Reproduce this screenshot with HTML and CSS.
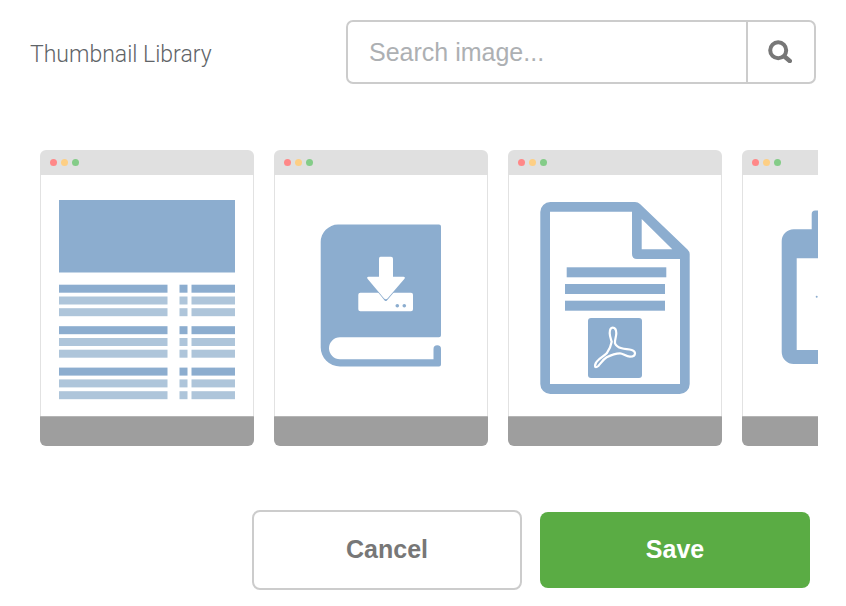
FILE: index.html
```html
<!DOCTYPE html>
<html lang="en">
<head>
  <meta charset="UTF-8">
  <meta name="viewport" content="width=device-width, initial-scale=1.0">
  <title>Thumbnail Library</title>
  <link rel="stylesheet" href="styles.css">
</head>
<body>
  <div class="library-head">
    <h2 class="library-title">Thumbnail Library</h2>
    <div class="search-box">
      <input class="search-input" type="text" placeholder="Search image...">
      <button class="search-btn" aria-label="Search">
        <svg width="24" height="24" viewBox="0 0 24 24">
          <circle cx="10.2" cy="11.3" r="8" fill="none" stroke="#777" stroke-width="4"/>
          <path d="M16.500 17.500 L21.800 22" stroke="#777" stroke-width="4.400" stroke-linecap="round"/>
        </svg>
      </button>
    </div>
  </div>

  <div class="thumb-row">
    <!-- Table layout -->
    <div class="thumb">
      <div class="thumb-bar"><span class="dot red"></span><span class="dot yellow"></span><span class="dot green"></span></div>
      <svg class="thumb-art" viewBox="1 0 212 241">
        <rect class="art" x="19" y="25" width="176" height="72.5"/>
        <g class="art"><rect x="19" y="109.7" width="108.5" height="8"/><rect x="139.5" y="109.7" width="8" height="8"/><rect x="151.5" y="109.7" width="43.5" height="8"/></g>
        <g class="art-light"><rect x="19" y="121.5" width="108.5" height="8"/><rect x="139.5" y="121.5" width="8" height="8"/><rect x="151.5" y="121.5" width="43.5" height="8"/></g>
        <g class="art-light"><rect x="19" y="133.2" width="108.5" height="8"/><rect x="139.5" y="133.2" width="8" height="8"/><rect x="151.5" y="133.2" width="43.5" height="8"/></g>
        <g class="art"><rect x="19" y="151.2" width="108.5" height="8"/><rect x="139.5" y="151.2" width="8" height="8"/><rect x="151.5" y="151.2" width="43.5" height="8"/></g>
        <g class="art-light"><rect x="19" y="163" width="108.5" height="8"/><rect x="139.5" y="163" width="8" height="8"/><rect x="151.5" y="163" width="43.5" height="8"/></g>
        <g class="art-light"><rect x="19" y="174.7" width="108.5" height="8"/><rect x="139.5" y="174.7" width="8" height="8"/><rect x="151.5" y="174.7" width="43.5" height="8"/></g>
        <g class="art"><rect x="19" y="192.6" width="108.5" height="8"/><rect x="139.5" y="192.6" width="8" height="8"/><rect x="151.5" y="192.6" width="43.5" height="8"/></g>
        <g class="art-light"><rect x="19" y="204.4" width="108.5" height="8"/><rect x="139.5" y="204.4" width="8" height="8"/><rect x="151.5" y="204.4" width="43.5" height="8"/></g>
        <g class="art-light"><rect x="19" y="216.2" width="108.5" height="8"/><rect x="139.5" y="216.2" width="8" height="8"/><rect x="151.5" y="216.2" width="43.5" height="8"/></g>
      </svg>
      <div class="thumb-foot"></div>
    </div>

    <!-- Ebook -->
    <div class="thumb">
      <div class="thumb-bar"><span class="dot red"></span><span class="dot yellow"></span><span class="dot green"></span></div>
      <svg class="thumb-art" viewBox="1 0 212 241">
        <path class="art" d="M64 49.5 H165 q2 0 2 2 V160.3 q0 2 -2 2 H66 a11 11 0 0 0 0 22 H159.5 V174 a3.75 3.75 0 0 1 7.5 0 V189.5 q0 2 -2 2 H66 A19.3 19.3 0 0 1 46.7 172 V67 A17.5 17.5 0 0 1 64 49.5 Z"/>
        <path fill="#fff" d="M86 117.7 H137 q2 0 2 2 V134.3 q0 2 -2 2 H86.3 q-2 0 -2 -2 V119.7 q0 -2 2 -2 Z"/>
        <path fill="#fff" stroke="#8cadcf" stroke-width="3" stroke-linejoin="round" d="M105 101.7 H93.500 L111.800 124.500 L131 101.700 H119 Z"/>
        <path fill="#fff" d="M106.500 81.700 H117 q2 0 2 2 V101.700 H129.500 q2 0 1 2 L113.500 123.500 q-1.700 1.500 -3.400 0 L93.500 103.700 q-1 -2 1 -2 H105 V83.700 q0 -2 1.500 -2 Z"/>
        <circle class="art" cx="123.300" cy="130.700" r="1.800"/>
        <circle class="art" cx="130.300" cy="130.700" r="1.800"/>
      </svg>
      <div class="thumb-foot"></div>
    </div>

    <!-- PDF file -->
    <div class="thumb">
      <div class="thumb-bar"><span class="dot red"></span><span class="dot yellow"></span><span class="dot green"></span></div>
      <svg class="thumb-art" viewBox="1 0 212 241">
        <path class="art" fill-rule="evenodd" d="M42 27 H127 q3 0 5 2 L179.500 74.500 q2.200 2.200 2.200 4.500 V209 a10 10 0 0 1 -10 10 H42.300 a10 10 0 0 1 -10 -10 V37 a10 10 0 0 1 10 -10 Z M42 36.700 V209 H172 V84 H129 q-5 0 -5 -5 V36.700 Z M133.700 44 V74.300 H164.300 Z"/>
        <rect class="art" x="58.700" y="92.300" width="99.600" height="10"/>
        <rect class="art" x="57" y="109" width="100" height="10"/>
        <rect class="art" x="57" y="125.700" width="100" height="10"/>
        <rect class="art" x="80" y="143" width="54" height="60" rx="3"/>
        <path fill="none" stroke="#fff" stroke-width="2.200" stroke-linejoin="round" d="M104.700 152.700 C107 152.700 108.300 155 108.300 158.300 C108.300 162 106.500 165 107 168.300 C108 171 111 172.500 113.700 173.300 C117 174.300 120.500 174 123.700 175 C126 175.700 127 177 127 178.300 C127 180.500 125 181.700 122 181.700 C118 181.700 115 178.300 112 178.300 C107 178.300 103 180 98.700 182.300 C95 184.500 93 188 90.300 191 C88.500 192.500 87 192.500 87 191 C87 188.500 88 187 90.300 185 C93 182.500 96 181 98.700 178.300 C101 175 103 171 103.700 166.700 C102.500 163 101.700 161 101.700 158.300 C101.700 155 102.700 152.700 104.700 152.700 Z"/>
      </svg>
      <div class="thumb-foot"></div>
    </div>

    <!-- Calendar, runs off the row -->
    <div class="thumb">
      <div class="thumb-bar"><span class="dot red"></span><span class="dot yellow"></span><span class="dot green"></span></div>
      <svg class="thumb-art" viewBox="1 0 212 241">
        <path class="art" fill-rule="evenodd" d="M51.700 54.300 H69.700 V39 a3.500 3.500 0 0 1 3.500 -3.500 H100 V189 H51.700 a12 12 0 0 1 -12 -12 V66.300 a12 12 0 0 1 12 -12 Z M54.700 83.300 V175 H100 V83.300 Z"/>
        <circle class="art" cx="74.700" cy="121.700" r="1"/>
      </svg>
      <div class="thumb-foot"></div>
    </div>
  </div>

  <div class="actions">
    <button class="btn btn-cancel">Cancel</button>
    <button class="btn btn-save">Save</button>
  </div>
</body>
</html>
```

FILE: styles.css
```css
/* Page */
body {
  margin: 0;
  background-color: #fff;
  font-family: 'Liberation Sans', Arial, sans-serif;
}

/* Header with title and search */
.library-head {
  display: flex;
  align-items: center;
  justify-content: space-between;
  padding: 20px 30px 0;
}

.library-title {
  margin: 4px 0 0;
  font-family: 'Roboto', 'Liberation Sans', sans-serif;
  font-size: 23px;
  font-weight: 300;
  color: #5f6468;
}

.search-box {
  display: flex;
  box-sizing: border-box;
  width: 470px;
  height: 64px;
  border: 2px solid #ccc;
  border-radius: 7px;
}

.search-input {
  flex: 1;
  min-width: 0;
  padding: 0 21px;
  border: none;
  outline: none;
  background: none;
  font-family: inherit;
  font-size: 25px;
  color: #555;
}

.search-input::placeholder {
  color: #adb0b3;
}

.search-btn {
  display: flex;
  align-items: center;
  justify-content: center;
  width: 68px;
  padding: 0 2px 2px 0;
  border: none;
  border-left: 2px solid #ccc;
  background: none;
  cursor: pointer;
}

/* Thumbnails */
.thumb-row {
  display: flex;
  gap: 20px;
  width: 778px;
  margin: 66px 0 0 40px;
  overflow: hidden;
}

.thumb {
  flex: 0 0 214px;
  height: 296px;
  display: flex;
  flex-direction: column;
  border-radius: 6px;
  overflow: hidden;
}

.thumb-bar {
  flex: 0 0 25px;
  display: flex;
  align-items: center;
  gap: 4px;
  padding-left: 9.5px;
  background-color: #e0e0e0;
}

.dot {
  width: 7px;
  height: 7px;
  border-radius: 50%;
}

.dot.red { background-color: #f88; }
.dot.yellow { background-color: #fdcf85; }
.dot.green { background-color: #84cc88; }

.thumb-art {
  display: block;
  box-sizing: border-box;
  width: 214px;
  height: 241px;
  border-left: 1px solid #e2e2e2;
  border-right: 1px solid #e2e2e2;
  filter: blur(0.4px);
}

.art { fill: #8cadcf; }
.art-light { fill: #aec5da; }

.thumb-foot {
  flex: 1;
  background-color: #9e9e9e;
  border-top: 1px solid #b5b5b5;
}

/* Buttons */
.actions {
  display: flex;
  align-items: center;
  justify-content: flex-end;
  gap: 18px;
  margin-top: 64px;
  padding-right: 36px;
}

.btn {
  width: 270px;
  padding: 0 0 2px;
  font-family: inherit;
  font-size: 25px;
  font-weight: bold;
  border-radius: 8px;
  cursor: pointer;
}

.btn-cancel {
  height: 80px;
  border: 2px solid #ccc;
  background-color: #fff;
  color: #777;
}

.btn-save {
  height: 76px;
  border: none;
  background-color: #5aac44;
  color: #fff;
}
```
